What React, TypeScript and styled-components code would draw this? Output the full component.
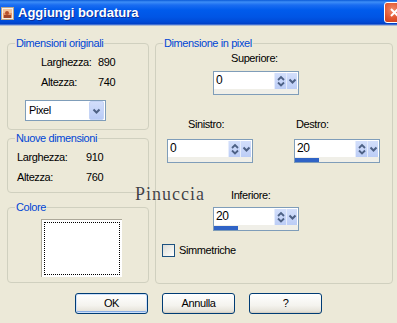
import React from "react";
import styled, { createGlobalStyle } from "styled-components";

const GlobalStyle = createGlobalStyle`
  html, body {
    margin: 0;
    padding: 0;
    background: #ece9d8;
  }
  * {
    box-sizing: border-box;
  }
`;

const Window = styled.div`
  position: relative;
  width: 397px;
  height: 323px;
  overflow: hidden;
  background: #ece9d8;
  font-family: "Liberation Sans", Arial, sans-serif;
  font-size: 11px;
  letter-spacing: -0.4px;
  color: #000;
  display: flex;
  flex-direction: column;
`;

const TitleBar = styled.div`
  height: 26px;
  flex: none;
  display: flex;
  align-items: center;
  padding-left: 1px;
  overflow: hidden;
  background: linear-gradient(
    180deg,
    #0a5ad8 0px,
    #3d8ef7 2px,
    #1a6df1 5px,
    #005bec 10px,
    #0055e5 17px,
    #004ad6 22px,
    #003fc4 24px,
    #7d9de0 25px,
    #d8d5c8 26px
  );
`;

const TitleText = styled.div`
  margin-left: 4px;
  font-size: 13px;
  font-weight: 700;
  letter-spacing: 0;
  color: #fff;
  text-shadow: 1px 1px 0 #0b2e9c;
  line-height: 16px;
  margin-top: -1px;
`;

const CloseButton = styled.div`
  margin-left: auto;
  margin-right: -8px;
  margin-top: -1px;
  width: 21px;
  height: 21px;
  flex: none;
  border: 1px solid #fff;
  border-radius: 3px;
  background: radial-gradient(circle at 40% 35%, #f08a6a 0%, #e0522c 55%, #c23a14 100%);
  display: grid;
  place-items: center;
`;

const Body = styled.div`
  flex: 1;
  display: flex;
  flex-direction: column;
  padding: 17px 4px 0 7px;
`;

const Panels = styled.div`
  display: flex;
  gap: 6px;
`;

const LeftColumn = styled.div`
  width: 142px;
  display: flex;
  flex-direction: column;
`;

const Group = styled.div<{ $gap?: number; $height: number; $width?: number }>`
  position: relative;
  margin-top: ${({ $gap }) => $gap ?? 0}px;
  height: ${({ $height }) => $height}px;
  width: ${({ $width }) => ($width ? `${$width}px` : "auto")};
  border: 1px solid #d0d0bf;
  border-radius: 4px;
`;

const Legend = styled.span`
  position: absolute;
  top: -7px;
  left: 7px;
  padding: 0 1px;
  background: #ece9d8;
  color: #0046d5;
  line-height: 13px;
  white-space: nowrap;
`;

const InfoGrid = styled.div<{ $indent: number; $labelWidth: number }>`
  display: grid;
  grid-template-columns: ${({ $labelWidth }) => $labelWidth}px auto;
  padding: 8px 0 0 ${({ $indent }) => $indent}px;
  line-height: 20px;
`;

const Select = styled.div`
  margin: 8px 0 0 17px;
  width: 81px;
  height: 21px;
  border: 1px solid #7f9db9;
  background: #fff;
  display: flex;
  align-items: center;
`;

const SelectText = styled.span`
  flex: 1;
  padding-left: 3px;
  line-height: 19px;
`;

const SelectButton = styled.div`
  width: 15px;
  height: 19px;
  margin-right: 1px;
  border-radius: 2px;
  background: linear-gradient(180deg, #d2defb 0%, #b9cbf6 100%);
  border: 1px solid #c5d4f6;
  display: grid;
  place-items: center;
`;

const ColorWell = styled.div`
  margin: 11px 0 0 33px;
  width: 81px;
  height: 58px;
  background: #fff;
  border-top: 1px solid #aca899;
  border-left: 1px solid #aca899;
  padding: 2px;
`;

const ColorInner = styled.div`
  width: 100%;
  height: 100%;
  border: 1px dotted #000;
`;

const RightGroup = styled(Group)`
  display: flex;
  flex-direction: column;
  padding-top: 7px;
`;

const Field = styled.div<{ $left: number; $gap?: number }>`
  display: flex;
  flex-direction: column;
  margin-left: ${({ $left }) => $left}px;
  margin-top: ${({ $gap }) => $gap ?? 0}px;
`;

const FieldLabel = styled.span<{ $indent: number; $space: number }>`
  line-height: 14px;
  padding-left: ${({ $indent }) => $indent}px;
  margin-bottom: ${({ $space }) => $space}px;
`;

const FieldRow = styled.div`
  display: flex;
  gap: 41px;
  margin-top: 22px;
  margin-left: 11px;
`;

const SpinBox = styled.div`
  width: 86px;
  height: 24px;
  border: 1px solid #7f9db9;
  background: #fff;
  display: flex;
  flex-direction: column;
`;

const SpinTop = styled.div`
  height: 17px;
  display: flex;
  align-items: flex-start;
  padding-top: 1px;
`;

const SpinValue = styled.span`
  flex: 1;
  padding-left: 2px;
  line-height: 15px;
  font-size: 12px;
`;

const SpinButton = styled.div<{ $width: number }>`
  width: ${({ $width }) => $width}px;
  height: 16px;
  background: linear-gradient(180deg, #d3dffb 0%, #bccdf6 100%);
  border-left: 1px solid #e6edfc;
  display: grid;
  place-items: center;
`;

const SpinGap = styled.div`
  width: 1px;
`;

const Track = styled.div`
  flex: 1;
  background: #f0efe8;
  display: flex;
  align-items: flex-end;
`;

const TrackFill = styled.div<{ $fill: number }>`
  width: ${({ $fill }) => $fill}px;
  height: 4px;
  background: #2f63c6;
`;

const CheckRow = styled.div`
  display: flex;
  align-items: center;
  gap: 4px;
  margin: 13px 0 0 6px;
  line-height: 13px;
`;

const CheckBox = styled.div`
  width: 13px;
  height: 13px;
  border: 1px solid #1c5180;
  background: linear-gradient(135deg, #dcdcd7 0%, #f4f4f0 70%, #fff 100%);
`;

const ButtonRow = styled.div`
  display: flex;
  justify-content: center;
  gap: 14px;
  margin-top: 9px;
  margin-left: -7px;
  margin-right: -4px;
`;

const Button = styled.div<{ $default?: boolean }>`
  width: 73px;
  height: 21px;
  border: 1px solid #003c74;
  border-radius: 3px;
  background: linear-gradient(180deg, #ffffff 0%, #f4f3ee 60%, #e6e3da 90%, #d6d0c5 100%);
  box-shadow: ${({ $default }) =>
    $default
      ? "inset 0 0 0 1px #cde0fb, inset 0 -2px 0 0 #89ade4"
      : "inset 0 -1px 0 0 #d6d0c5"};
  display: grid;
  place-items: center;
  line-height: 13px;
`;

const Watermark = styled.div`
  position: absolute;
  left: 135px;
  top: 185px;
  font-family: "Liberation Serif", "Times New Roman", serif;
  font-size: 18px;
  line-height: 18px;
  letter-spacing: 1px;
  color: #444;
  text-shadow: 0 0 1px #fff;
  pointer-events: none;
`;

const SpinArrows = () => (
  <svg width="12" height="16" viewBox="0 0 12 16">
    <polyline points="3,7 6,4 9,7" fill="none" stroke="#4d6185" strokeWidth="1.8" />
    <polyline points="3,9.5 6,12.5 9,9.5" fill="none" stroke="#4d6185" strokeWidth="1.8" />
  </svg>
);

const DownChevron = ({ w = 11 }: { w?: number }) => (
  <svg width={w} height="16" viewBox={`0 0 ${w} 16`}>
    <polyline
      points={`${w / 2 - 3},6.5 ${w / 2},9.5 ${w / 2 + 3},6.5`}
      fill="none"
      stroke="#4d6185"
      strokeWidth="2"
    />
  </svg>
);

interface SpinProps {
  label: string;
  value: string;
  indent: number;
  space: number;
  left?: number;
  gap?: number;
  fill?: number;
}

const SpinField = ({ label, value, indent, space, left = 0, gap, fill }: SpinProps) => (
  <Field $left={left} $gap={gap}>
    <FieldLabel $indent={indent} $space={space}>
      {label}
    </FieldLabel>
    <SpinBox>
      <SpinTop>
        <SpinValue>{value}</SpinValue>
        <SpinButton $width={12}>
          <SpinArrows />
        </SpinButton>
        <SpinButton $width={11}>
          <DownChevron />
        </SpinButton>
        <SpinGap />
      </SpinTop>
      <Track>{fill ? <TrackFill $fill={fill} /> : null}</Track>
    </SpinBox>
  </Field>
);

export default function App() {
  return (
    <>
      <GlobalStyle />
      <Window>
        <TitleBar>
          <svg width="13" height="15" viewBox="0 0 13 15">
            <rect x="0.5" y="1.5" width="12" height="12" fill="#f4efe6" stroke="#b9a58a" />
            <rect x="2" y="3" width="9" height="9" fill="#e89a6c" />
            <rect x="2" y="3" width="9" height="4" fill="#f3c39a" />
            <circle cx="6" cy="7" r="2" fill="#b6502c" />
            <rect x="3" y="9" width="7" height="3" fill="#a0452a" />
          </svg>
          <TitleText>Aggiungi bordatura</TitleText>
          <CloseButton>
            <svg width="11" height="11" viewBox="0 0 11 11">
              <path d="M2 2 L9 9 M9 2 L2 9" stroke="#fff" strokeWidth="2" />
            </svg>
          </CloseButton>
        </TitleBar>

        <Body>
          <Panels>
            <LeftColumn>
              <Group $height={87}>
                <Legend>Dimensioni originali</Legend>
                <InfoGrid $indent={33} $labelWidth={57}>
                  <span>Larghezza:</span>
                  <span>890</span>
                  <span>Altezza:</span>
                  <span>740</span>
                </InfoGrid>
                <Select>
                  <SelectText>Pixel</SelectText>
                  <SelectButton>
                    <DownChevron w={13} />
                  </SelectButton>
                </Select>
              </Group>

              <Group $gap={8} $height={55}>
                <Legend>Nuove dimensioni</Legend>
                <InfoGrid $indent={9} $labelWidth={69}>
                  <span>Larghezza:</span>
                  <span>910</span>
                  <span>Altezza:</span>
                  <span>760</span>
                </InfoGrid>
              </Group>

              <Group $gap={14} $height={76}>
                <Legend>Colore</Legend>
                <ColorWell>
                  <ColorInner />
                </ColorWell>
              </Group>
            </LeftColumn>

            <RightGroup $height={241} $width={238}>
              <Legend>Dimensione in pixel</Legend>
              <SpinField label="Superiore:" value="0" indent={18} space={6} left={57} />
              <FieldRow>
                <SpinField label="Sinistro:" value="0" indent={21} space={8} />
                <SpinField label="Destro:" value="20" indent={2} space={8} fill={24} />
              </FieldRow>
              <SpinField
                label="Inferiore:"
                value="20"
                indent={18}
                space={5}
                left={57}
                gap={25}
                fill={24}
              />
              <CheckRow>
                <CheckBox />
                <span>Simmetriche</span>
              </CheckRow>
            </RightGroup>
          </Panels>

          <ButtonRow>
            <Button $default>OK</Button>
            <Button>Annulla</Button>
            <Button>?</Button>
          </ButtonRow>
        </Body>

        <Watermark>Pinuccia</Watermark>
      </Window>
    </>
  );
}
